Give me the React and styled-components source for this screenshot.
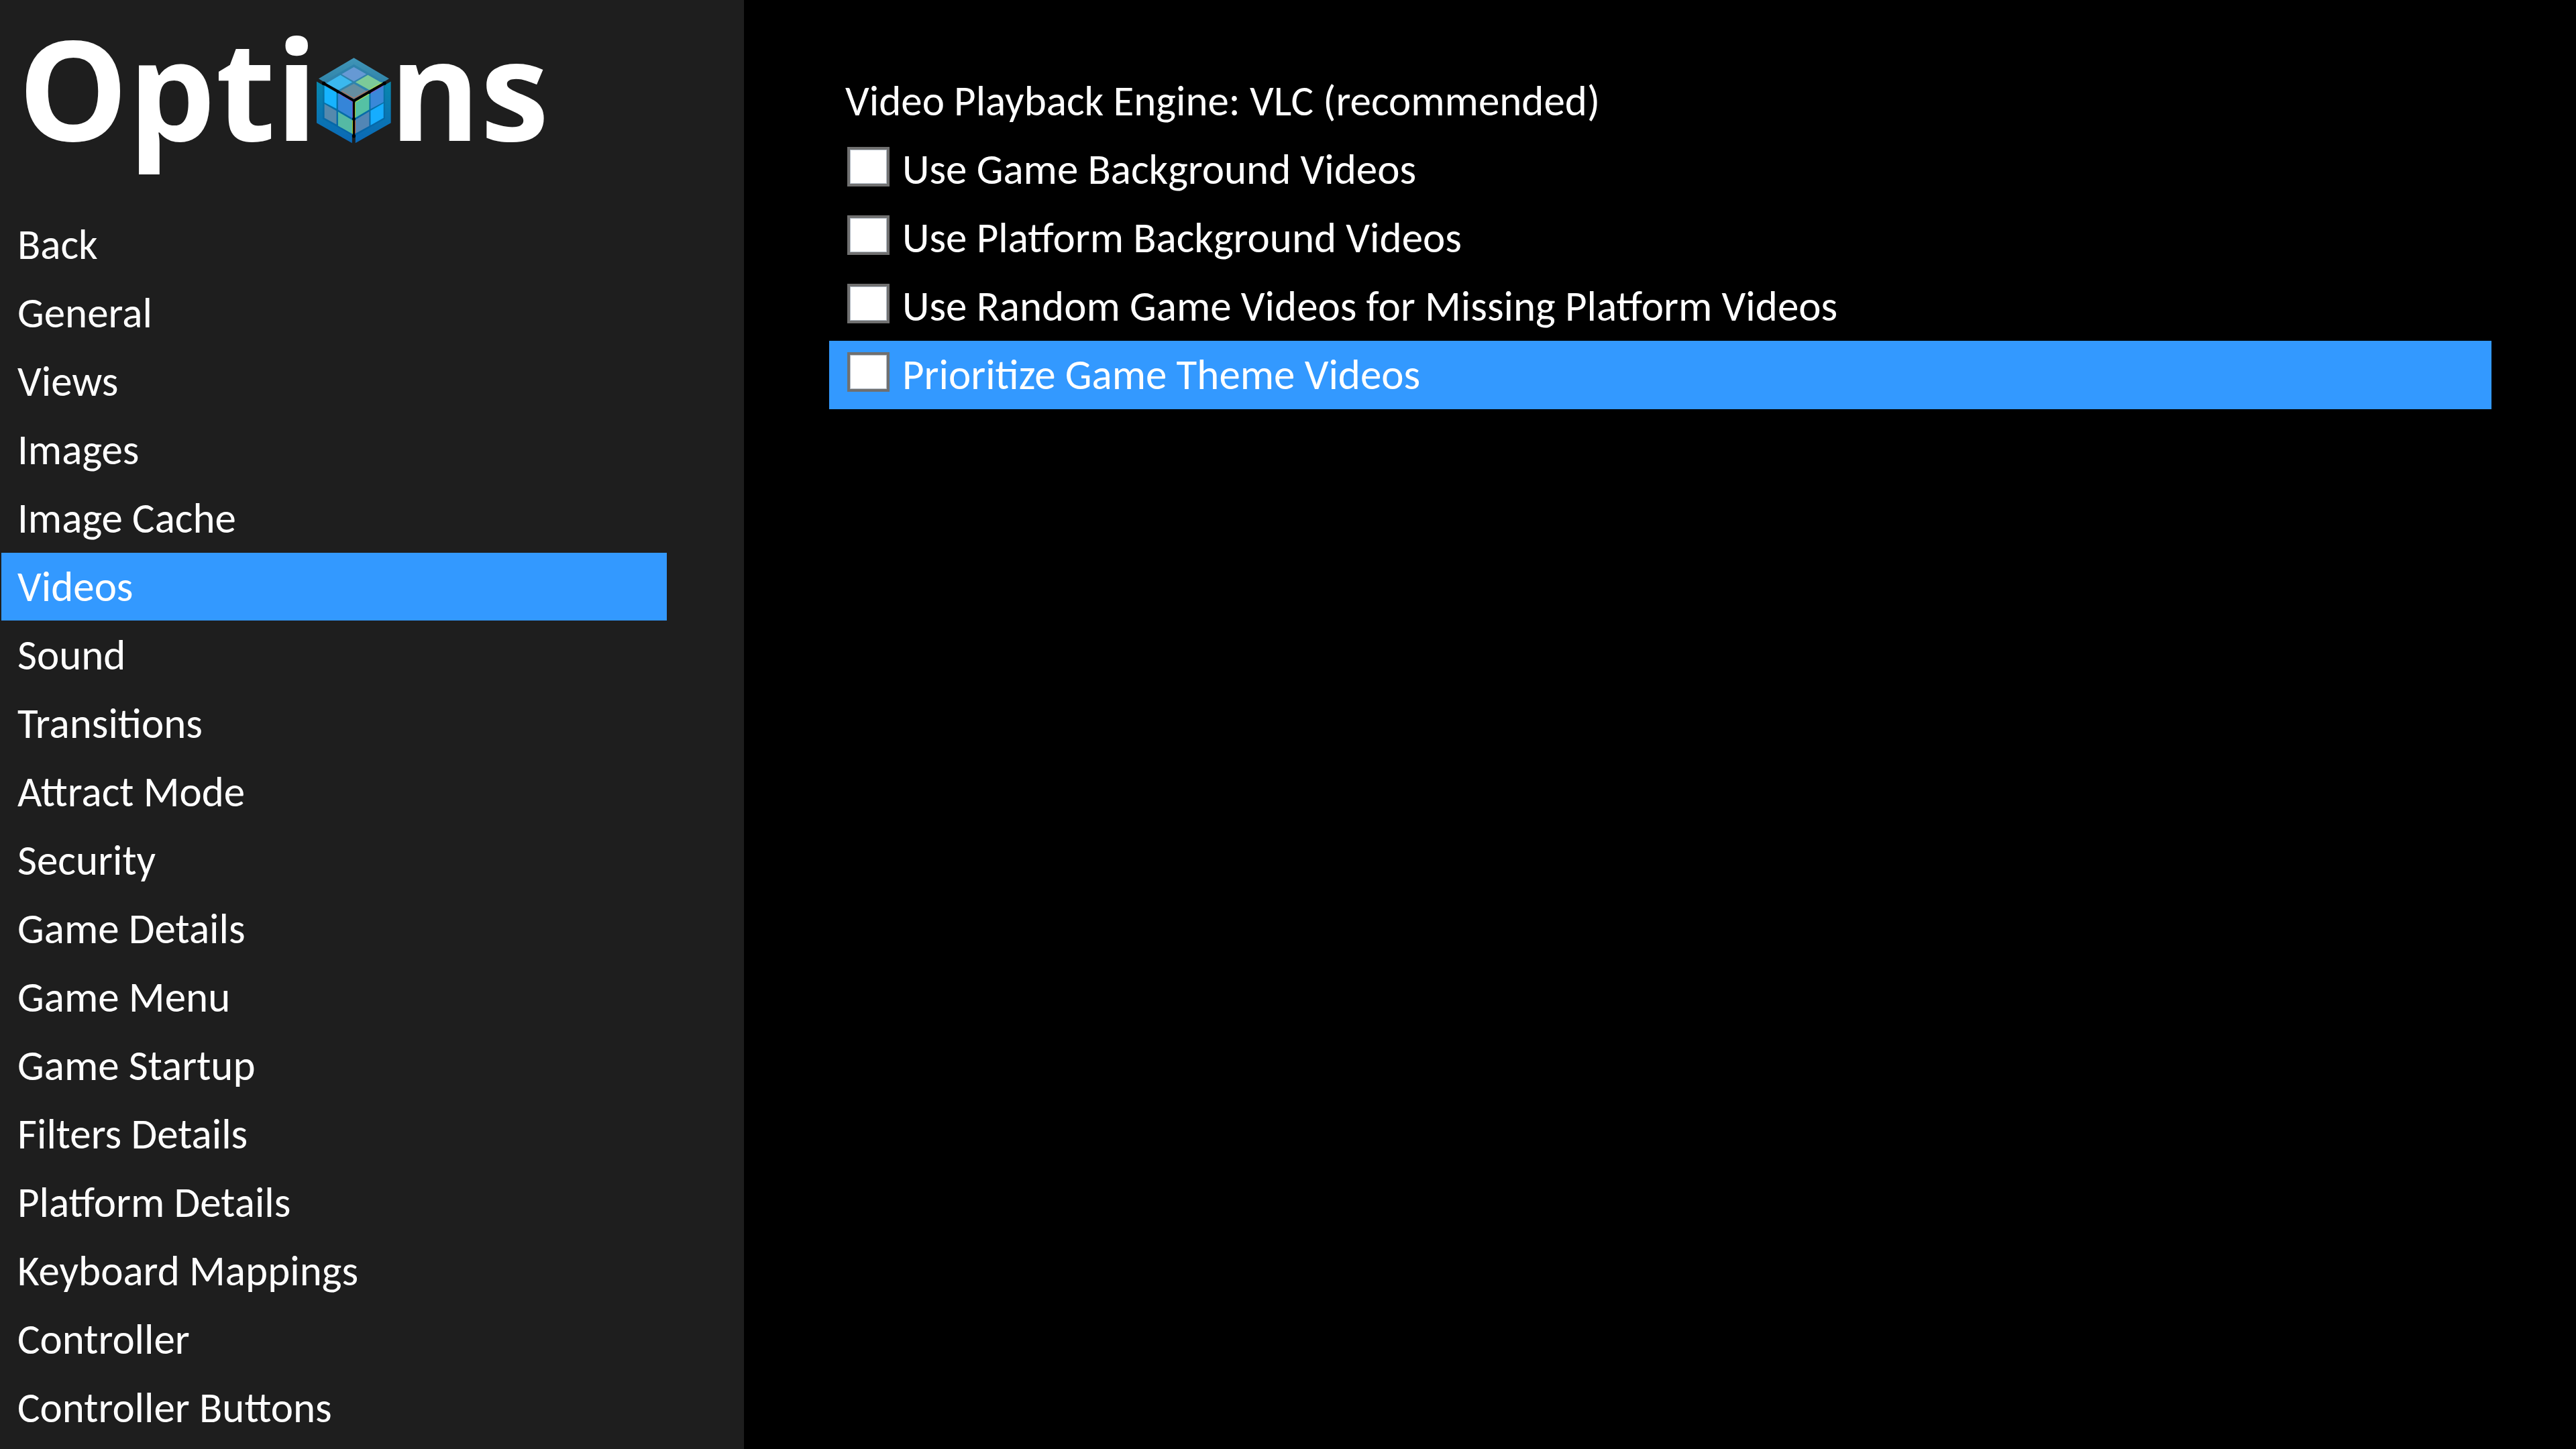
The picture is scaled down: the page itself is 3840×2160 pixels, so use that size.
import React from "react";
import styled, { createGlobalStyle } from "styled-components";

const GlobalStyle = createGlobalStyle`
  *, *::before, *::after { box-sizing: border-box; }
  body { margin: 0; background: #000; }
`;

const Screen = styled.div`
  display: flex;
  min-height: 100vh;
  background: #000;
  color: #fff;
  font-family: Calibri, Carlito, Lato, sans-serif;
  font-size: 63px;
  line-height: 102px;
`;

const Sidebar = styled.aside`
  flex: 0 0 28.88%;
  background: #1e1e1e;
`;

const Title = styled.h1`
  margin: 0;
  padding: 10px 0 64px 27px;
  font-family: "Open Sans", "Noto Sans", sans-serif;
  font-size: 206px;
  font-weight: 700;
  line-height: 240px;
  white-space: nowrap;
`;

const CubeIcon = styled.svg`
  width: 111px;
  height: 128px;
  margin: 0 -2px;
  vertical-align: -4px;
`;

const Menu = styled.nav`
  display: flex;
  flex-direction: column;
  padding: 0 115px 0 2px;
`;

const MenuItem = styled.button`
  height: 102px;
  padding: 0 24px;
  border: 0;
  border-bottom: 1px solid #1e1e1e;
  background: ${(p) => (p.$active ? "#3399ff" : "transparent")};
  color: inherit;
  font: inherit;
  text-align: left;
  white-space: nowrap;
  cursor: pointer;
`;

const Content = styled.main`
  flex: 1;
  min-width: 0;
  padding: 100px 126px 0 127px;
`;

const Setting = styled.div`
  padding: 0 24px;
`;

const Option = styled.label`
  display: flex;
  align-items: flex-start;
  gap: 19px;
  padding: 0 24px 0 27px;
  background: ${(p) => (p.$active ? "#3399ff" : "transparent")};
  cursor: pointer;
`;

const Checkbox = styled.input`
  appearance: none;
  flex: none;
  width: 63px;
  height: 59px;
  margin: 17px 0 0;
  border: 4px solid #707070;
  background: #fff;
  box-shadow: inset 0 0 0 1px #b3bcc6;

  &:checked {
    box-shadow: inset 0 0 0 10px #fff;
    background: #212121;
  }
`;

const sections = [
  "Back", "General", "Views", "Images", "Image Cache", "Videos", "Sound", "Transitions",
  "Attract Mode", "Security", "Game Details", "Game Menu", "Game Startup", "Filters Details",
  "Platform Details", "Keyboard Mappings", "Controller", "Controller Buttons",
];

const options = [
  { label: "Use Game Background Videos" },
  { label: "Use Platform Background Videos" },
  { label: "Use Random Game Videos for Missing Platform Videos" },
  { label: "Prioritize Game Theme Videos", active: true },
];

function Cube() {
  return (
    <CubeIcon viewBox="66 48 334 386" preserveAspectRatio="none" aria-hidden="true">
      <defs>
        <linearGradient id="top" x1="0" y1="0" x2="0" y2="1">
          <stop offset="0" stopColor="#4095b8" />
          <stop offset="1" stopColor="#26799f" />
        </linearGradient>
        <linearGradient id="side" x1="0" y1="0" x2="0" y2="1">
          <stop offset="0" stopColor="#0888ae" />
          <stop offset="1" stopColor="#0b68b6" />
        </linearGradient>
        <linearGradient id="inner" x1="0" y1="0" x2="0" y2="1">
          <stop offset="0" stopColor="#0678a6" />
          <stop offset="1" stopColor="#0663a9" />
        </linearGradient>
      </defs>
      <path fill="url(#top)" d="M233 49 391 142 374 153 233 236 92 153 75 142Z" />
      <path fill="#2f83ac" d="M233 78 367 156 233 236 99 156Z" />
      <path fill="url(#side)" d="M66 155 225 247V432L66 341ZM399 155 240 247V432L399 341Z" />
      <path fill="url(#inner)" d="M93 170 229 247V400L93 323ZM373 170 237 247V400L373 323Z" />
      <path fill="#6699d4" d="M233 90 289 122 233 154 178 122Z" />
      <path fill="#3bb8ef" d="M173 126 226 158 165 193 109 163Z" />
      <path fill="#7cca98" d="M296 126 358 161 302 193 240 158Z" />
      <path fill="#658ea0" d="M233 165 290 198 233 232 174 197Z" />
      <path fill="#17b4ff" d="M101 173 155 204V277L101 249Z" />
      <path fill="#3585d8" d="M162 208 227 246V320L162 282Z" />
      <path fill="#5589ad" d="M101 256 155 287V348L101 319Z" />
      <path fill="#55b9a4" d="M162 291 227 329V391L162 354Z" />
      <path fill="#55c1a4" d="M240 246 302 209V281L240 318Z" />
      <path fill="#3a88d8" d="M308 206 366 173V248L308 279Z" />
      <path fill="#5286b5" d="M240 327 302 290V355L240 389Z" />
      <path fill="#16adff" d="M308 286 366 253V319L308 352Z" />
      <g fill="none" strokeWidth="3">
        <path stroke="#e0602c" d="M178 199 233 231 298 195M239 330V388" />
        <path stroke="#c8e62a" d="M306 190 360 160M240 248 300 212M239 250V318M227 330V390" />
        <path stroke="#8a4fd0" d="M166 210 227 246V318M308 208 364 176" />
      </g>
      <path fill="none" stroke="#000" strokeWidth="10" strokeLinecap="round" d="M98 163 233 241 370 163M233 241V400" />
      <circle cx="98" cy="163" r="8" />
      <circle cx="370" cy="163" r="8" />
      <circle cx="233" cy="400" r="8" />
      <circle cx="162" cy="201" r="7" />
      <circle cx="302" cy="203" r="7" />
      <circle cx="233" cy="323" r="7" />
    </CubeIcon>
  );
}

export default function App() {
  return (
    <>
      <GlobalStyle />
      <Screen>
        <Sidebar>
          <Title aria-label="Options">Opti<Cube />ns</Title>
          <Menu>
            {sections.map((name) => (
              <MenuItem key={name} type="button" $active={name === "Videos"}>{name}</MenuItem>
            ))}
          </Menu>
        </Sidebar>
        <Content>
          <Setting>Video Playback Engine: VLC (recommended)</Setting>
          {options.map(({ label, active }) => (
            <Option key={label} $active={active}>
              <Checkbox type="checkbox" />
              {label}
            </Option>
          ))}
        </Content>
      </Screen>
    </>
  );
}
